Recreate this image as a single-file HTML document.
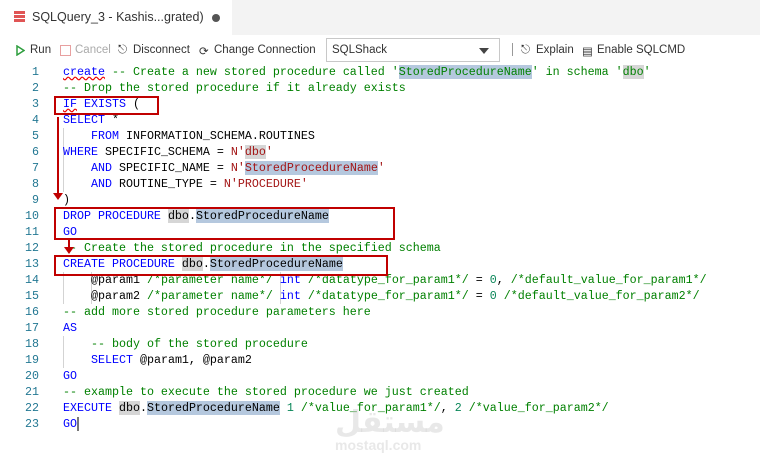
<!DOCTYPE html><html><head><style>
body{margin:0;width:760px;height:460px;background:#fff;position:relative;overflow:hidden;font-family:"Liberation Sans",sans-serif}
.top{position:absolute;left:0;top:0;width:760px;height:35px;background:#f3f3f3}
.tab{position:absolute;left:0;top:0;width:232px;height:35px;background:#fff;font-size:12.5px;color:#333}
.tb{position:absolute;top:44px;font-size:11.5px;color:#333}
.code{position:absolute;left:0;top:64px;font-family:"Liberation Mono",monospace;font-size:11.67px}
.l{height:16px;line-height:16px;white-space:pre;position:relative}
.n{position:absolute;left:0;width:39px;text-align:right;color:#237893}
.c{position:absolute;left:63px;color:#000}
.k{color:#0000ff}.g{color:#008000}.r{color:#a31515}.num{color:#098658}
.h{background:#b5c8de}.d{background:#d6d6d6}
.box{position:absolute;border:2px solid #c00000}
.guide{position:absolute;width:1px;background:#d3d3d3}
</style></head><body>
<div class="top"></div>
<div class="tab">
<svg style="position:absolute;left:14px;top:11px" width="11" height="11"><rect x="0" y="0" width="11" height="3" fill="#e05555"/><rect x="0" y="4" width="11" height="3" fill="#e05555"/><rect x="0" y="8" width="11" height="3" fill="#e05555"/></svg>
<span style="position:absolute;left:32px;top:10px">SQLQuery_3 - Kashis...grated)</span>
<span style="position:absolute;left:212px;top:14px;width:8px;height:8px;border-radius:50%;background:#555"></span></div>
<svg style="position:absolute;left:16px;top:45px" width="9" height="11"><path d="M1 1L8 5.5L1 10Z" fill="none" stroke="#2e9e3e" stroke-width="1.5"/></svg>
<span class="tb" style="left:30px">Run</span>
<span style="position:absolute;left:60px;top:45px;width:9px;height:9px;border:1px solid #e8a0a0"></span>
<span class="tb" style="left:75px;color:#aaa">Cancel</span>
<span class="tb" style="left:118px">&#9099;</span>
<span class="tb" style="left:133px">Disconnect</span>
<span class="tb" style="left:199px">&#10227;</span>
<span class="tb" style="left:214px">Change Connection</span>
<div style="position:absolute;left:326px;top:38px;width:172px;height:22px;border:1px solid #c8c8c8;background:#fff;font-size:11.5px;color:#333"><span style="position:absolute;left:5px;top:5px">SQLShack</span><svg style="position:absolute;left:152px;top:9px" width="10" height="6"><path d="M0 0H10L5 6Z" fill="#444"/></svg></div>
<div style="position:absolute;left:512px;top:43px;width:1px;height:13px;background:#999"></div>
<span class="tb" style="left:521px">&#9099;</span>
<span class="tb" style="left:536px">Explain</span>
<span class="tb" style="left:582px">&#9636;</span>
<span class="tb" style="left:597px">Enable SQLCMD</span>
<div class="guide" style="left:63px;top:128px;height:64px"></div>
<div class="guide" style="left:63px;top:272px;height:32px"></div>
<div class="guide" style="left:91px;top:272px;height:32px"></div>
<div class="guide" style="left:280px;top:272px;height:32px"></div>
<div class="guide" style="left:63px;top:336px;height:32px"></div>
<div class="code">
<div class="l"><span class="n">1</span><span class="c"><span class="k" style="text-decoration:underline wavy #e00">create</span> <span class="g">-- Create a new stored procedure called '<span class="h">StoredProcedureName</span>' in schema '<span class="d">dbo</span>'</span></span></div>
<div class="l"><span class="n">2</span><span class="c g">-- Drop the stored procedure if it already exists</span></div>
<div class="l"><span class="n">3</span><span class="c"><span class="k"><u style="text-decoration:underline wavy #e00">IF</u> EXISTS</span> (</span></div>
<div class="l"><span class="n">4</span><span class="c"><span class="k">SELECT</span> *</span></div>
<div class="l"><span class="n">5</span><span class="c">    <span class="k">FROM</span> INFORMATION_SCHEMA.ROUTINES</span></div>
<div class="l"><span class="n">6</span><span class="c"><span class="k">WHERE</span> SPECIFIC_SCHEMA = <span class="r">N'<span class="d">dbo</span>'</span></span></div>
<div class="l"><span class="n">7</span><span class="c">    <span class="k">AND</span> SPECIFIC_NAME = <span class="r">N'<span class="h">StoredProcedureName</span>'</span></span></div>
<div class="l"><span class="n">8</span><span class="c">    <span class="k">AND</span> ROUTINE_TYPE = <span class="r">N'PROCEDURE'</span></span></div>
<div class="l"><span class="n">9</span><span class="c">)</span></div>
<div class="l"><span class="n">10</span><span class="c"><span class="k">DROP PROCEDURE</span> <span class="d">dbo</span>.<span class="h">StoredProcedureName</span></span></div>
<div class="l"><span class="n">11</span><span class="c k">GO</span></div>
<div class="l"><span class="n">12</span><span class="c g">-- Create the stored procedure in the specified schema</span></div>
<div class="l"><span class="n">13</span><span class="c"><span class="k">CREATE PROCEDURE</span> <span class="d">dbo</span>.<span class="h">StoredProcedureName</span></span></div>
<div class="l"><span class="n">14</span><span class="c">    @param1 <span class="g">/*parameter name*/</span> <span class="k">int</span> <span class="g">/*datatype_for_param1*/</span> = <span class="num">0</span>, <span class="g">/*default_value_for_param1*/</span></span></div>
<div class="l"><span class="n">15</span><span class="c">    @param2 <span class="g">/*parameter name*/</span> <span class="k">int</span> <span class="g">/*datatype_for_param1*/</span> = <span class="num">0</span> <span class="g">/*default_value_for_param2*/</span></span></div>
<div class="l"><span class="n">16</span><span class="c g">-- add more stored procedure parameters here</span></div>
<div class="l"><span class="n">17</span><span class="c k">AS</span></div>
<div class="l"><span class="n">18</span><span class="c">    <span class="g">-- body of the stored procedure</span></span></div>
<div class="l"><span class="n">19</span><span class="c">    <span class="k">SELECT</span> @param1, @param2</span></div>
<div class="l"><span class="n">20</span><span class="c k">GO</span></div>
<div class="l"><span class="n">21</span><span class="c g">-- example to execute the stored procedure we just created</span></div>
<div class="l"><span class="n">22</span><span class="c"><span class="k">EXECUTE</span> <span class="d">dbo</span>.<span class="h">StoredProcedureName</span> <span class="num">1</span> <span class="g">/*value_for_param1*/</span>, <span class="num">2</span> <span class="g">/*value_for_param2*/</span></span></div>
<div class="l"><span class="n">23</span><span class="c"><span class="k">GO</span><span style="display:inline-block;width:2px;height:14px;background:#777;vertical-align:middle"></span></span></div>
</div>
<div class="box" style="left:54px;top:96px;width:101px;height:15px"></div>
<div class="box" style="left:54px;top:207px;width:337px;height:29px"></div>
<div class="box" style="left:54px;top:255px;width:330px;height:17px"></div>
<svg style="position:absolute;left:0;top:0" width="760" height="460"><path d="M58 117V194" stroke="#c00000" stroke-width="2"/><path d="M53 193H63L58 200Z" fill="#c00000"/><path d="M69 239V248" stroke="#c00000" stroke-width="2"/><path d="M64 247H74L69 254Z" fill="#c00000"/></svg>
<div style="position:absolute;left:335px;top:405px;color:rgba(180,180,180,0.3);font:bold 30px 'DejaVu Sans',sans-serif">مستقل</div>
<div style="position:absolute;left:335px;top:437px;color:rgba(180,180,180,0.3);font:bold 14px 'Liberation Sans',sans-serif">mostaql.com</div>
</body></html>
